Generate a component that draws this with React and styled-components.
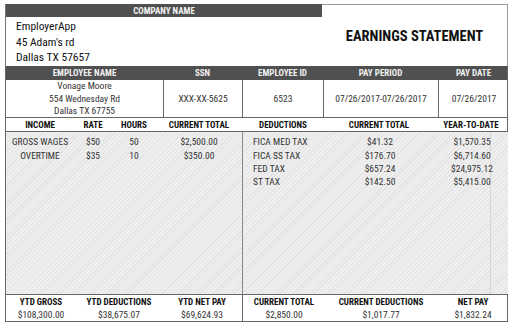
import styled, { createGlobalStyle } from 'styled-components';

const GlobalStyle = createGlobalStyle`
	body {
		margin: 0;
		background: #fff;
		font-family: "Liberation Sans Narrow", "Roboto Condensed", "DejaVu Sans Condensed", Roboto, sans-serif;
		font-stretch: condensed;
		color: #222;
	}
`;

const Page = styled.div`
	width: 503px;
	padding: 4px 0 0 5px;
`;

const Top = styled.div`
	display: grid;
	grid-template-columns: 317px 186px;
	height: 62px;
`;

const Company = styled.div`
	border-left: 1px solid #777;
	display: flex;
	flex-direction: column;
`;

const CompanyBar = styled.div`
	height: 13px;
	margin-bottom: 2px;
	background: #505050;
	color: #f2f2f2;
	font-size: 9px;
	font-weight: 700;
	display: flex;
	align-items: center;
	justify-content: center;
`;

const AddressLine = styled.div`
	font-size: 11.5px;
	line-height: 15.7px;
	padding-left: 10px;
	color: #111;
`;

const TitleBox = styled.div`
	border-top: 1px solid #999;
	border-right: 1px solid #999;
	display: flex;
	align-items: center;
	justify-content: center;
	font-size: 14.5px;
	font-weight: 700;
	color: #111;
	padding-top: 2px;
`;

const Sheet = styled.div`
	border-left: 1px solid #666;
	border-right: 1px solid #666;
	border-bottom: 1px solid #666;
`;

const HeadBar = styled.div`
	display: grid;
	grid-template-columns: 157px 79px 81px 115px 71px;
	height: 14px;
	background: #505050;
	color: #f0f0f0;
	font-size: 9px;
	font-weight: 700;
	align-items: center;
	text-align: center;
`;

const InfoRow = styled.div`
	display: grid;
	grid-template-columns: 157px 79px 81px 115px 71px;
	height: 37px;
	border-bottom: 1px solid #666;
`;

const InfoCell = styled.div`
	display: flex;
	flex-direction: column;
	justify-content: center;
	align-items: center;
	font-size: 9.5px;
	line-height: 12.5px;
	color: #333;
	border-left: ${(p) => (p.$first ? 'none' : '1px solid #666')};
`;

const Split = styled.div`
	display: grid;
	grid-template-columns: 236px 266px;
`;

const ColHead = styled.div`
	display: grid;
	grid-template-columns: ${(p) => p.$cols};
	height: 13px;
	align-items: center;
	text-align: center;
	font-size: 9px;
	font-weight: 700;
	color: #111;
	border-bottom: 1px solid #666;
`;

const Body = styled.div`
	height: 162px;
	padding-top: 3px;
	box-sizing: border-box;
	background: repeating-linear-gradient(135deg, #efefef 0 2px, #e3e3e3 2px 3px);
	border-left: ${(p) => (p.$divided ? '1px solid #888' : 'none')};
	position: relative;
`;

const GuideLine = styled.div`
	position: absolute;
	top: 0;
	bottom: 0;
	right: 17px;
	border-left: 1px solid #d6d6d6;
`;

const Row = styled.div`
	position: relative;
	display: grid;
	grid-template-columns: ${(p) => p.$cols};
	height: 13.4px;
	align-items: center;
	font-size: 9.5px;
	color: #333;
`;

const Cell = styled.div`
	text-align: ${(p) => p.$align || 'center'};
	padding-left: ${(p) => p.$pad || 0}px;
`;

const Footer = styled.div`
	display: grid;
	grid-template-columns: 236px 266px;
	border-top: 1px solid #666;
`;

const FootGroup = styled.div`
	display: grid;
	grid-template-columns: ${(p) => p.$cols};
	grid-template-rows: 13px 13px;
	align-items: center;
	text-align: center;
	border-left: ${(p) => (p.$divided ? '1px solid #666' : 'none')};
`;

const FootLabel = styled.div`
	font-size: 9px;
	font-weight: 700;
	color: #111;
`;

const FootValue = styled.div`
	font-size: 9.5px;
	color: #333;
`;

const income = [
	['GROSS WAGES', '$50', '50', '$2,500.00'],
	['OVERTIME', '$35', '10', '$350.00'],
];

const deductions = [
	['FICA MED TAX', '$41.32', '$1,570.35'],
	['FICA SS TAX', '$176.70', '$6,714.60'],
	['FED TAX', '$657.24', '$24,975.12'],
	['ST TAX', '$142.50', '$5,415.00'],
];

const IN_COLS = '68px 38px 44px 86px';
const DED_COLS = '82px 110px 74px';

const App = () => {
	return (
		<>
			<GlobalStyle />
			<Page>
				<Top>
					<Company>
						<CompanyBar>COMPANY NAME</CompanyBar>
						<AddressLine>EmployerApp</AddressLine>
						<AddressLine>45 Adam's rd</AddressLine>
						<AddressLine>Dallas TX 57657</AddressLine>
					</Company>
					<TitleBox>EARNINGS STATEMENT</TitleBox>
				</Top>
				<Sheet>
					<HeadBar>
						<div>EMPLOYEE NAME</div>
						<div>SSN</div>
						<div>EMPLOYEE ID</div>
						<div>PAY PERIOD</div>
						<div>PAY DATE</div>
					</HeadBar>
					<InfoRow>
						<InfoCell $first>
							<div>Vonage Moore</div>
							<div>554 Wednesday Rd</div>
							<div>Dallas TX 67755</div>
						</InfoCell>
						<InfoCell>XXX-XX-5625</InfoCell>
						<InfoCell>6523</InfoCell>
						<InfoCell>07/26/2017-07/26/2017</InfoCell>
						<InfoCell>07/26/2017</InfoCell>
					</InfoRow>
					<Split>
						<div>
							<ColHead $cols={IN_COLS}>
								<div>INCOME</div>
								<div>RATE</div>
								<div>HOURS</div>
								<div>CURRENT TOTAL</div>
							</ColHead>
							<Body>
								{income.map((r) => (
									<Row key={r[0]} $cols={IN_COLS}>
										<Cell>{r[0]}</Cell>
										<Cell>{r[1]}</Cell>
										<Cell>{r[2]}</Cell>
										<Cell>{r[3]}</Cell>
									</Row>
								))}
							</Body>
						</div>
						<div>
							<ColHead $cols={DED_COLS}>
								<div>DEDUCTIONS</div>
								<div>CURRENT TOTAL</div>
								<div>YEAR-TO-DATE</div>
							</ColHead>
							<Body $divided>
								<GuideLine />
								{deductions.map((r) => (
									<Row key={r[0]} $cols={DED_COLS}>
										<Cell $align="left" $pad={10}>{r[0]}</Cell>
										<Cell>{r[1]}</Cell>
										<Cell>{r[2]}</Cell>
									</Row>
								))}
							</Body>
						</div>
					</Split>
					<Footer>
						<FootGroup $cols="70px 86px 80px">
							<FootLabel>YTD GROSS</FootLabel>
							<FootLabel>YTD DEDUCTIONS</FootLabel>
							<FootLabel>YTD NET PAY</FootLabel>
							<FootValue>$108,300.00</FootValue>
							<FootValue>$38,675.07</FootValue>
							<FootValue>$69,624.93</FootValue>
						</FootGroup>
						<FootGroup $divided $cols="82px 112px 72px">
							<FootLabel>CURRENT TOTAL</FootLabel>
							<FootLabel>CURRENT DEDUCTIONS</FootLabel>
							<FootLabel>NET PAY</FootLabel>
							<FootValue>$2,850.00</FootValue>
							<FootValue>$1,017.77</FootValue>
							<FootValue>$1,832.24</FootValue>
						</FootGroup>
					</Footer>
				</Sheet>
			</Page>
		</>
	);
};

export default App;
